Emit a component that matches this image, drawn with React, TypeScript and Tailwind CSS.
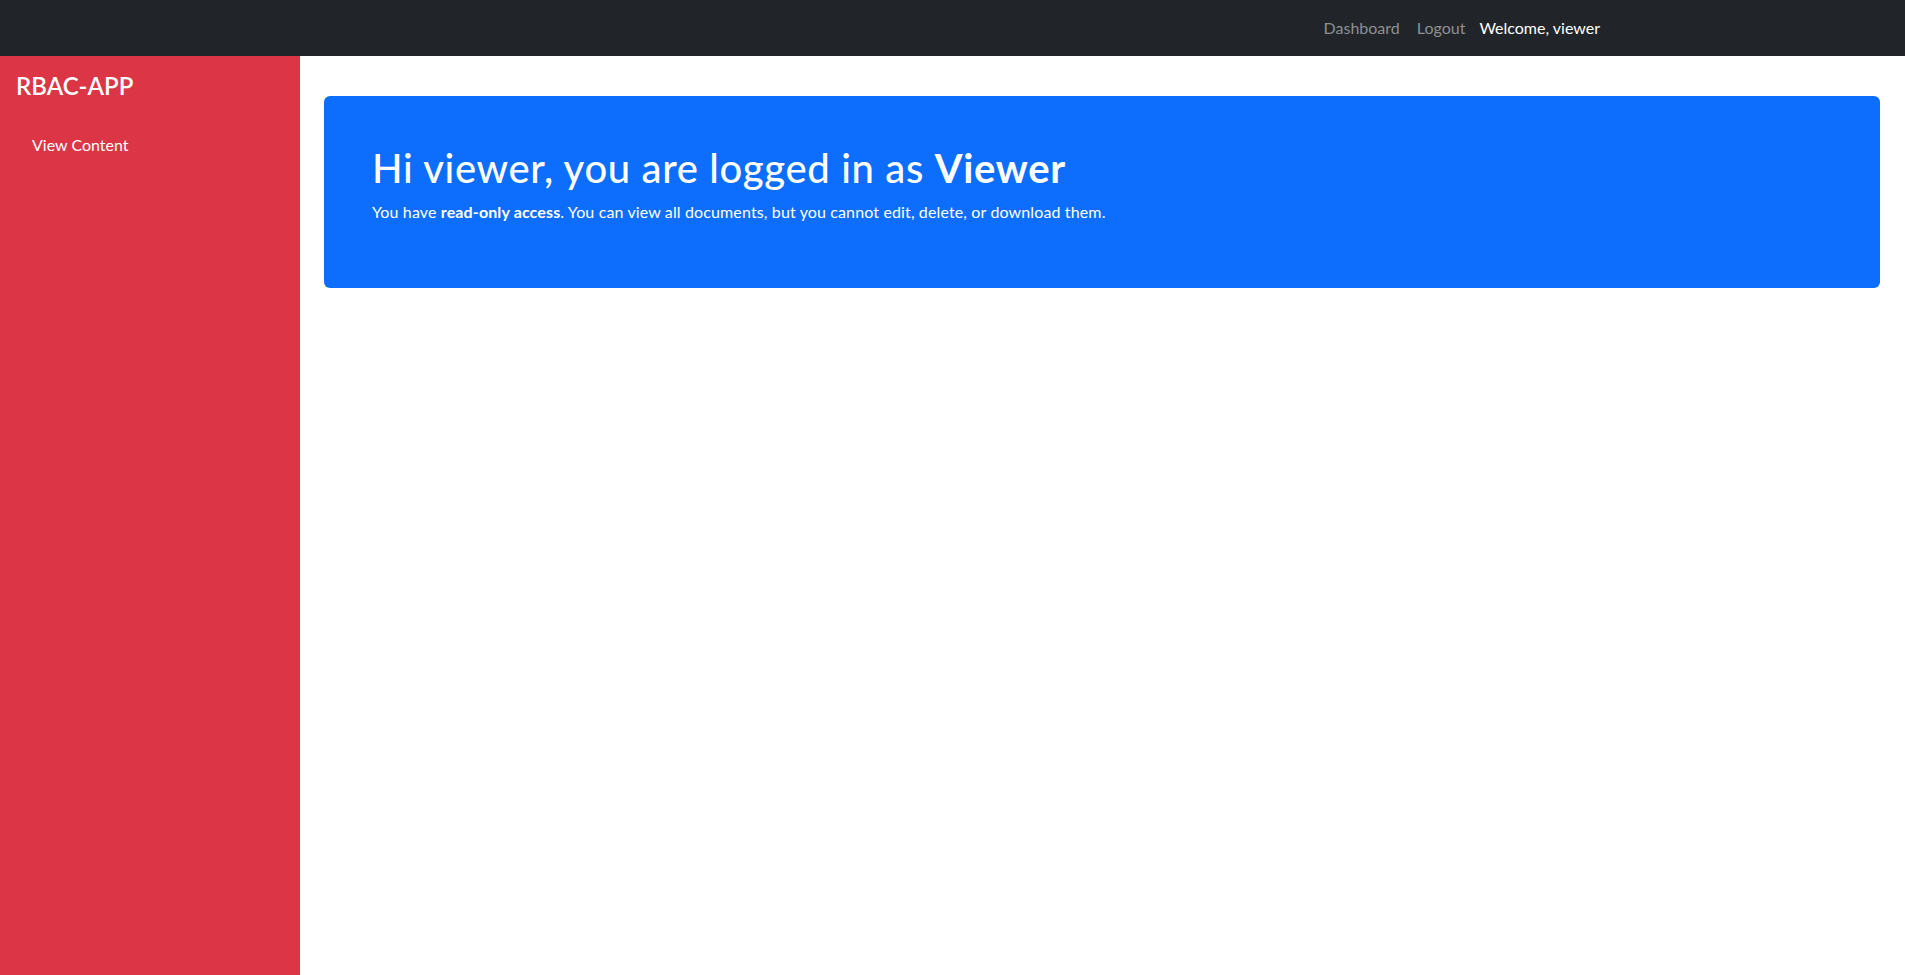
import React from "react";

export default function App() {
  return (
    <div
      className="flex h-screen flex-col bg-white"
      style={{ fontFamily: '"Lato", "Noto Sans", sans-serif' }}
    >
      <nav className="flex h-[56px] shrink-0 items-center bg-[#212529] pr-[305px]">
        <div className="ml-auto flex items-center text-[16px]">
          <a className="px-2 text-[#8e9094]" href="#">Dashboard</a>
          <a className="pl-[9px] pr-2 text-[#8e9094]" href="#">Logout</a>
          <span className="ml-[6px] text-white">Welcome, viewer</span>
        </div>
      </nav>
      <div className="flex min-h-0 flex-1">
        <aside className="w-[300px] shrink-0 bg-[#dc3545] px-4 pt-[16px] text-white">
          <div className="text-[24px] font-semibold leading-[1.2]">RBAC-APP</div>
          <ul className="mt-[24px]">
            <li className="px-4 py-2 text-[16px]">View Content</li>
          </ul>
        </aside>
        <main className="flex-1 pl-6 pr-[25px] pt-[40px]">
          <div className="rounded-[6px] bg-[#0d6efd] px-12 py-12 text-white">
            <h1 className="mb-2 text-[40px] font-medium leading-[1.2] tracking-[0.65px]">
              Hi viewer, you are logged in as <span className="font-bold">Viewer</span>
            </h1>
            <p className="mb-4 text-[16px] leading-[1.5] tracking-[0.13px]">
              You have <strong className="font-bold">read-only access</strong>. You can view all documents, but you cannot edit, delete, or download them.
            </p>
          </div>
        </main>
      </div>
    </div>
  );
}
